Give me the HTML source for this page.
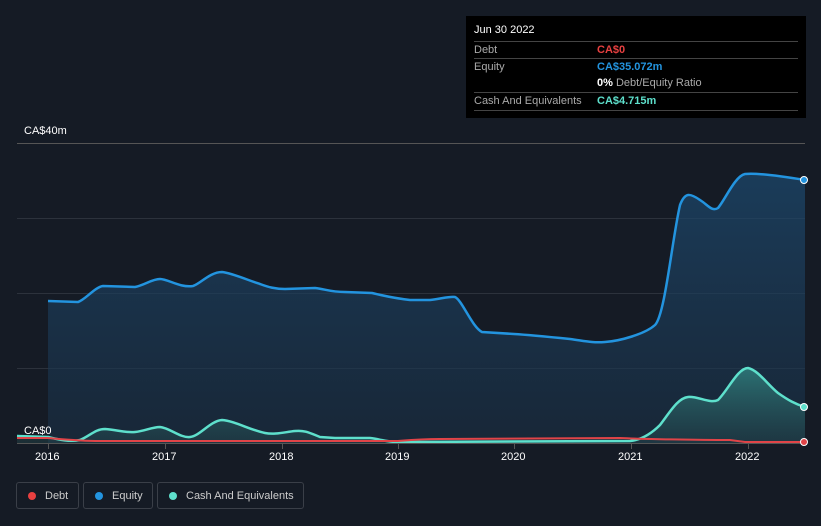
<!DOCTYPE html>
<html><head><style>
body{margin:0;width:821px;height:526px;background:#151b25;font-family:"Liberation Sans",sans-serif;overflow:hidden;position:relative}
.tt{position:absolute;left:466px;top:16px;width:340px;height:102px;background:#000;color:#fff;font-size:11px}
.tt .r{position:absolute;left:8px;width:324px;border-top:1px solid #444;height:17px;line-height:17px}
.tt .l{color:#aaa;position:absolute;left:0}
.tt .v{position:absolute;left:123px;font-weight:bold}
.ax{position:absolute;color:#fff;font-size:11px}
.lg{position:absolute;top:482px;height:27px;border:1px solid #3a3f48;border-radius:3px;color:#ccc;font-size:11px;line-height:27px;box-sizing:border-box}
.lg i{position:absolute;left:11px;top:9px;width:8px;height:8px;border-radius:50%}
</style></head><body>
<svg width="821" height="526" style="position:absolute;left:0;top:0">
<defs>
<linearGradient id="ge" x1="0" y1="0" x2="0" y2="1"><stop offset="0" stop-color="#1d4a70" stop-opacity=".7"/><stop offset="1" stop-color="#1a2f44" stop-opacity=".6"/></linearGradient>
<linearGradient id="gc" x1="0" y1="0" x2="0" y2="1"><stop offset="0" stop-color="#3fb8a8" stop-opacity=".5"/><stop offset="1" stop-color="#2a5a5a" stop-opacity=".3"/></linearGradient>
</defs>
<g stroke="#2c323c" stroke-width="1">
<line x1="17" y1="143.5" x2="805" y2="143.5" stroke="#555"/>
<line x1="17" y1="218.5" x2="805" y2="218.5"/>
<line x1="17" y1="293.5" x2="805" y2="293.5"/>
<line x1="17" y1="368.5" x2="805" y2="368.5"/>
</g>
<path d="M48,301 L78,302 C85,300 95,287 103,286 L135,287 C145,285 152,279 160,279 C168,279 180,288 193,286 C200,284 210,272 222,272 C232,273 250,281 260,284 C268,287 275,289 285,289 L315,288 C325,289 330,292 345,292 L372,293 C385,296 392,298 410,300 L430,300 C440,299 450,296 455,297 C462,300 472,327 482,332 L514,334 C530,335 550,337 570,339 C585,341 592,343 605,342 C620,341 645,334 655,325 C665,315 672,240 680,205 C685,192 690,193 700,200 C708,205 712,212 718,208 C725,200 735,176 745,174 C755,173 775,175 805,180 L805,443 L48,443 Z" fill="url(#ge)"/>
<path d="M48,301 L78,302 C85,300 95,287 103,286 L135,287 C145,285 152,279 160,279 C168,279 180,288 193,286 C200,284 210,272 222,272 C232,273 250,281 260,284 C268,287 275,289 285,289 L315,288 C325,289 330,292 345,292 L372,293 C385,296 392,298 410,300 L430,300 C440,299 450,296 455,297 C462,300 472,327 482,332 L514,334 C530,335 550,337 570,339 C585,341 592,343 605,342 C620,341 645,334 655,325 C665,315 672,240 680,205 C685,192 690,193 700,200 C708,205 712,212 718,208 C725,200 735,176 745,174 C755,173 775,175 805,180" fill="none" stroke="#2394df" stroke-width="2.5"/>
<path d="M17,436 L48,437 C60,440 70,442 80,440 C90,436 95,429 105,429 C118,430 125,433 135,432 C145,431 152,427 160,427 C170,428 180,438 190,437 C200,436 210,421 222,420 C235,421 250,430 265,433 C275,435 285,432 295,431 C305,430 310,433 320,437 L335,438 L370,438 C380,439 385,442 398,442 L630,441 C640,440 650,435 660,425 C670,412 678,398 688,397 C698,396 710,404 718,400 C728,390 738,368 748,368 C758,370 768,385 778,393 C788,400 795,404 805,407 L805,443 L17,443 Z" fill="url(#gc)"/>
<path d="M17,436 L48,437 C60,440 70,442 80,440 C90,436 95,429 105,429 C118,430 125,433 135,432 C145,431 152,427 160,427 C170,428 180,438 190,437 C200,436 210,421 222,420 C235,421 250,430 265,433 C275,435 285,432 295,431 C305,430 310,433 320,437 L335,438 L370,438 C380,439 385,442 398,442 L630,441 C640,440 650,435 660,425 C670,412 678,398 688,397 C698,396 710,404 718,400 C728,390 738,368 748,368 C758,370 768,385 778,393 C788,400 795,404 805,407" fill="none" stroke="#5ee0cc" stroke-width="2.5"/>
<path d="M17,438 L48,438 C60,439 80,441 100,441 L398,441 C410,440 420,439 440,439 L620,438 C640,439 700,440 730,440 L745,442 L805,442" fill="none" stroke="#e04448" stroke-width="2"/>
<line x1="17" y1="443.5" x2="805" y2="443.5" stroke="#555"/>
<g stroke="#555"><line x1="48.5" y1="443" x2="48.5" y2="449"/><line x1="165.5" y1="443" x2="165.5" y2="449"/><line x1="282.5" y1="443" x2="282.5" y2="449"/><line x1="398.5" y1="443" x2="398.5" y2="449"/><line x1="514.5" y1="443" x2="514.5" y2="449"/><line x1="631.5" y1="443" x2="631.5" y2="449"/><line x1="748.5" y1="443" x2="748.5" y2="449"/></g>
<circle cx="804" cy="180" r="3.5" fill="#2394df" stroke="#fff" stroke-width="1"/>
<circle cx="804" cy="407" r="3.5" fill="#5ee0cc" stroke="#fff" stroke-width="1"/>
<circle cx="804" cy="442" r="3.5" fill="#e04448" stroke="#fff" stroke-width="1"/>
</svg>
<div class="ax" style="left:24px;top:125px">CA$40m</div>
<div class="ax" style="left:24px;top:425px">CA$0</div>
<div class="ax" style="left:35px;top:451px">2016</div>
<div class="ax" style="left:152px;top:451px">2017</div>
<div class="ax" style="left:269px;top:451px">2018</div>
<div class="ax" style="left:385px;top:451px">2019</div>
<div class="ax" style="left:501px;top:451px">2020</div>
<div class="ax" style="left:618px;top:451px">2021</div>
<div class="ax" style="left:735px;top:451px">2022</div>
<div class="tt">
<div style="position:absolute;left:8px;top:8px">Jun 30 2022</div>
<div class="r" style="top:25px"><span class="l">Debt</span><span class="v" style="color:#e84040">CA$0</span></div>
<div class="r" style="top:42px"><span class="l">Equity</span><span class="v" style="color:#2394df">CA$35.072m</span></div>
<div class="r" style="top:59px;border-top:none"><span class="v" style="color:#fff">0% <span style="font-weight:normal;color:#aaa">Debt/Equity Ratio</span></span></div>
<div class="r" style="top:76px;border-bottom:1px solid #444"><span class="l">Cash And Equivalents</span><span class="v" style="color:#5ee0cc">CA$4.715m</span></div>
</div>
<div class="lg" style="left:16px;width:63px"><i style="background:#e84040"></i><span style="margin-left:28px">Debt</span></div>
<div class="lg" style="left:83px;width:70px"><i style="background:#2394df"></i><span style="margin-left:28px">Equity</span></div>
<div class="lg" style="left:157px;width:147px"><i style="background:#5ee0cc"></i><span style="margin-left:28px">Cash And Equivalents</span></div>
</body></html>
